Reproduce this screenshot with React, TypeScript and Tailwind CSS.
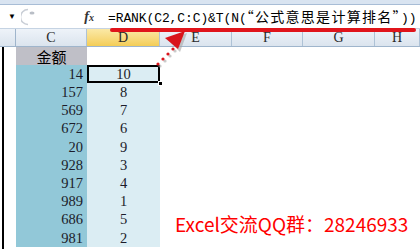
import React from "react";

const rows = [
  { amount: 14, rank: 10 },
  { amount: 157, rank: 8 },
  { amount: 569, rank: 7 },
  { amount: 672, rank: 6 },
  { amount: 20, rank: 9 },
  { amount: 928, rank: 3 },
  { amount: 917, rank: 4 },
  { amount: 989, rank: 1 },
  { amount: 686, rank: 5 },
  { amount: 981, rank: 2 },
];

const cols = [
  { name: "C", w: "w-[71px]", active: false },
  { name: "D", w: "w-[73px]", active: true },
  { name: "E", w: "w-[72px]", active: false },
  { name: "F", w: "w-[71px]", active: false },
  { name: "G", w: "w-[72px]", active: false },
  { name: "H", w: "flex-1", active: false },
];

export default function App() {
  return (
    <div className="relative w-[420px] h-[249px] overflow-hidden bg-white font-['Liberation_Serif',serif] text-[#1a1a1a]">
      {/* ribbon edge */}
      <div className="h-[5px] bg-[#d9e4f1] border-b border-[#a8bdd6]" />

      {/* formula bar */}
      <div className="flex h-[24px] items-center bg-white border-b border-[#c5d3e3]">
        <div className="flex w-[108px] items-center h-full">
          <span className="ml-[8px] text-[8px] leading-none text-black">▼</span>
          <svg width="16" height="18" viewBox="0 0 16 18" className="ml-[5px]">
            <path d="M7 1.5 A7.5 7.5 0 0 0 7 16.5" fill="none" stroke="#c9ced6" strokeWidth="1.5" />
            <ellipse cx="11" cy="5" rx="2.5" ry="1.6" fill="#b9bec6" />
          </svg>
          <span className="ml-auto mr-[14px] italic font-bold text-[14px] leading-none text-[#333]">
            f<span className="text-[10px]">x</span>
          </span>
        </div>
        <div className="whitespace-nowrap font-['Liberation_Mono',monospace] text-[13px] tracking-[-0.1px] text-black leading-none pt-[1px]">
          =RANK(C2,C:C)&amp;T(N(
          <span className="font-['Noto_Sans_CJK_SC',sans-serif] text-[14px] tracking-[1.3px]">“公式意思是计算排名”</span>
          ))
        </div>
      </div>

      {/* column headers */}
      <div className="flex h-[18px] bg-gradient-to-b from-[#eef3f9] to-[#dbe4ee] border-b border-[#9fb5cc]">
        <div className="w-[16px] border-r border-[#9fb5cc]" />
        {cols.map((c) => (
          <div
            key={c.name}
            className={`${c.w} flex items-center justify-center border-r border-[#aec2d6] text-[14px] leading-none text-[#2a2a2a] ${
              c.active ? "bg-gradient-to-b from-[#fbe9a6] to-[#f4cd55]" : ""
            }`}
          >
            {c.name}
          </div>
        ))}
      </div>

      {/* sheet body */}
      <div className="flex">
        <div className="w-[16px] pl-[2px]">
          <div className="w-[1.5px] h-[210px] bg-black" />
        </div>
        <div className="w-[71px]">
          <div className="h-[18px] bg-[#bfbfc7] flex items-center justify-center font-['Noto_Sans_CJK_SC',sans-serif] text-[15px] leading-none text-black">
            金额
          </div>
          {rows.map((r) => (
            <div
              key={r.amount}
              className="h-[18.2px] bg-[#92c8d8] flex items-center justify-end pr-[4px] text-[14.5px] leading-none text-[#1c1c2a]"
            >
              {r.amount}
            </div>
          ))}
        </div>
        <div className="w-[73px]">
          <div className="h-[18px] bg-white" />
          {rows.map((r, i) => (
            <div
              key={r.amount}
              className={`h-[18.2px] bg-[#dbedf3] flex items-center justify-center text-[14.5px] leading-none text-[#1c1c2a] ${
                i === 0 ? "relative border-[2.5px] border-black" : ""
              }`}
            >
              {r.rank}
              {i === 0 && (
                <span className="absolute right-[-5px] bottom-[-5px] w-[5px] h-[5px] bg-black border border-white" />
              )}
            </div>
          ))}
        </div>
        <div className="flex-1 bg-white" />
      </div>

      {/* red underline */}
      <div className="absolute left-[110px] top-[28px] w-[306px] h-[4px] rounded-full bg-[#e0141b]" />

      {/* dotted arrow */}
      <svg className="absolute left-[150px] top-[26px]" width="45" height="45" viewBox="0 0 45 45">
        <g fill="#a7a7a7" opacity="0.6">
          <circle cx="10" cy="40" r="1.6" />
          <circle cx="15" cy="35" r="1.6" />
          <circle cx="20" cy="30" r="1.6" />
          <circle cx="25" cy="25" r="1.6" />
          <polygon points="18,14 37,7 30,26" />
        </g>
        <g fill="#d9141c">
          <circle cx="8" cy="38" r="1.6" />
          <circle cx="13" cy="33" r="1.6" />
          <circle cx="18" cy="28" r="1.6" />
          <circle cx="23" cy="23" r="1.6" />
          <polygon points="15,12 35,5 28,23" />
        </g>
      </svg>

      {/* watermark */}
      <div className="absolute left-[175px] top-[214px] whitespace-nowrap font-['Noto_Sans_CJK_SC',sans-serif] text-[19px] leading-none text-[#ff0000]">
        Excel交流QQ群：28246933
      </div>
    </div>
  );
}
